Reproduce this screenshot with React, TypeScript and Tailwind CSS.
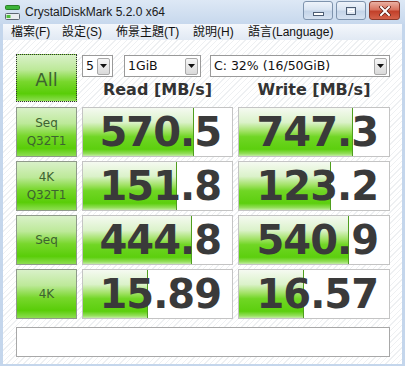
import * as React from 'react';

const ui = { fontFamily: '"Liberation Sans", "Noto Sans CJK TC", sans-serif' };
const dv = { fontFamily: '"DejaVu Sans", Verdana, sans-serif' };

const BTN_BG =
  'bg-[linear-gradient(to_bottom,#d9f1c9_0%,#bde999_32%,#78d72c_58%,#59cd08_84%,#8ede52_100%)]';
const BAR_BG =
  'bg-[linear-gradient(to_bottom,#f5faf1_0%,#dbf2ca_30%,#a2e266_48%,#70d624_60%,#5ccf0e_86%,#93de5a_95%,#c2eca4_100%)]';

const ROWS = [
  { label: ['Seq', 'Q32T1'], read: '570.5', readW: 111, write: '747.3', writeW: 114 },
  { label: ['4K', 'Q32T1'], read: '151.8', readW: 94, write: '123.2', writeW: 92 },
  { label: ['Seq'], read: '444.8', readW: 109, write: '540.9', writeW: 110 },
  { label: ['4K'], read: '15.89', readW: 65, write: '16.57', writeW: 65 },
];

function DropButton() {
  return (
    <div className="flex items-center justify-center w-[13px] h-[17px] border border-[#a9a9a9] rounded-[2px] bg-[linear-gradient(to_bottom,#f6f6f6,#dadada)]">
      <svg width="7" height="4" viewBox="0 0 7 4">
        <path d="M0 0h7l-3.5 4z" fill="#111" />
      </svg>
    </div>
  );
}

function Combo({ text, className }: { text: string; className: string }) {
  return (
    <div
      className={`flex items-center justify-between h-[22px] pl-[3px] pr-[2px] bg-white border border-[#9a9a9a] ${className}`}
    >
      <span className="text-[12.5px] text-[#111]" style={dv}>
        {text}
      </span>
      <DropButton />
    </div>
  );
}

function ValueBox({ value, fill }: { value: string; fill: number }) {
  return (
    <div className="relative h-[50px] bg-white border border-[#c4c4c4] flex items-center justify-end pr-[11px] overflow-hidden">
      <div
        className={`absolute left-0 top-0 bottom-0 ${BAR_BG} border-r border-[#4f9e1e]`}
        style={{ width: fill }}
      />
      <span
        className="relative text-[40px] font-bold leading-none tracking-[-1px] text-[#3a3a3a]"
        style={dv}
      >
        {value}
      </span>
    </div>
  );
}

function WinButton({ kind }: { kind: 'min' | 'max' | 'close' }) {
  if (kind === 'close') {
    return (
      <div className="flex items-center justify-center w-[31px] h-[19px] rounded-[3px] border border-[#8b3a2c] bg-[linear-gradient(to_bottom,#eab0a2_0%,#d8735f_45%,#c2402a_55%,#d4624a_100%)]">
        <svg width="12" height="10" viewBox="0 0 12 10">
          <path d="M2 1l8 8M10 1L2 9" stroke="#5a1a10" strokeWidth="3.4" strokeLinecap="square" />
          <path d="M2 1l8 8M10 1L2 9" stroke="#fff" strokeWidth="2" strokeLinecap="square" />
        </svg>
      </div>
    );
  }
  return (
    <div className="flex items-center justify-center w-[30px] h-[19px] rounded-[3px] border border-[#7e93ad] bg-[linear-gradient(to_bottom,#eef3fa_0%,#d9e4f2_45%,#c4d4e8_55%,#d6e2f1_100%)]">
      {kind === 'min' ? (
        <div className="w-[11px] h-[4px] mt-[6px] bg-white border border-[#4d5d73]" />
      ) : (
        <div className="w-[10px] h-[8px] border border-[#4d5d73] bg-[#dfe7f2] flex items-center justify-center">
          <div className="w-[6px] h-[3px] border border-white" />
        </div>
      )}
    </div>
  );
}

export default function App() {
  return (
    <div className="w-[405px] h-[366px] flex flex-col overflow-hidden bg-[#c4d6ec]" style={ui}>
      {/* Title bar */}
      <div className="h-[24px] flex items-center pl-[5px] pr-[5px] bg-[linear-gradient(to_bottom,#dde8f5,#c7d8ed)]">
        <svg width="15" height="15" viewBox="0 0 15 15" className="mr-[5px]">
          <rect x="0.5" y="0.5" width="14" height="4" rx="1" fill="#3cb43a" stroke="#2a7d28" />
          <rect x="0.5" y="8.5" width="14" height="6" rx="1" fill="#e9ecef" stroke="#5d6671" />
          <rect x="1.5" y="10" width="4" height="3" fill="#4fbf3c" />
        </svg>
        <span className="text-[12px] text-[#1b1b1b]">CrystalDiskMark 5.2.0 x64</span>
        <div className="ml-auto flex gap-[3px] self-start pt-[1px]">
          <WinButton kind="min" />
          <WinButton kind="max" />
          <WinButton kind="close" />
        </div>
      </div>

      {/* Menu bar */}
      <div className="h-[16px] mx-[3px] flex items-center pl-[8px] text-[12px] text-[#111] bg-[linear-gradient(to_bottom,#f4f7fc,#e1e9f4)]">
        <span className="w-[51px]">檔案(F)</span>
        <span className="w-[54px]">設定(S)</span>
        <span className="w-[77px]">佈景主題(T)</span>
        <span className="w-[55px]">說明(H)</span>
        <span>語言(Language)</span>
      </div>

      {/* Main panel */}
      <div className="flex-1 mx-[3px] mb-[2px] pl-[13px] pt-[14px] bg-[repeating-linear-gradient(135deg,#ffffff_0px,#ffffff_3px,#eef0f2_3px,#eef0f2_4px)]">
        <div className="flex gap-[5px]">
          <div
            className={`w-[61px] h-[48px] flex items-center justify-center border border-dotted border-[#2e2e2e] ${BTN_BG}`}
          >
            <span className="text-[18px] text-[#3d6330] pt-[2px]" style={dv}>
              All
            </span>
          </div>
          <div className="w-[308px] flex flex-col">
            <div className="flex mt-[1px]">
              <Combo text="5" className="w-[31px]" />
              <Combo text="1GiB" className="w-[77px] ml-[11px]" />
              <Combo text="C: 32% (16/50GiB)" className="w-[180px] ml-[9px]" />
            </div>
            <div className="grid grid-cols-[151px_152px] gap-x-[5px] h-[25px] items-center">
              <div className="text-center text-[16px] font-bold text-[#333]" style={dv}>
                Read [MB/s]
              </div>
              <div className="text-center text-[16px] font-bold text-[#333]" style={dv}>
                Write [MB/s]
              </div>
            </div>
          </div>
        </div>

        <div className="mt-[5px] grid grid-cols-[61px_151px_152px] gap-x-[5px] gap-y-[4px]">
          {ROWS.map((r, i) => (
            <React.Fragment key={i}>
              <div
                className={`h-[50px] flex flex-col items-center justify-center border border-[#8f9a8a] ${BTN_BG} text-[12px] leading-[18px] text-[#3d6330]`}
                style={dv}
              >
                {r.label.map((l) => (
                  <span key={l}>{l}</span>
                ))}
              </div>
              <ValueBox value={r.read} fill={r.readW} />
              <ValueBox value={r.write} fill={r.writeW} />
            </React.Fragment>
          ))}
        </div>

        {/* Status box */}
        <div className="mt-[8px] w-[374px] h-[30px] bg-white border border-[#a8a8a8]" />
      </div>
    </div>
  );
}
